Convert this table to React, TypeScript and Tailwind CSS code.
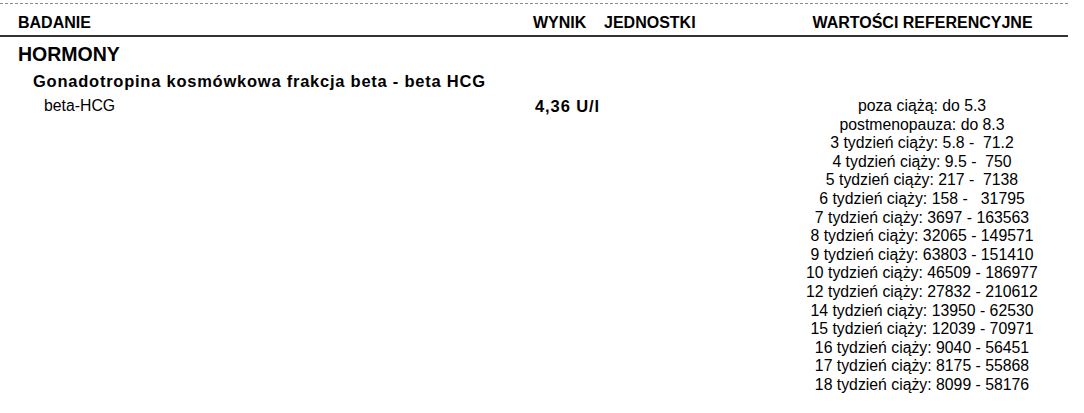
import React from "react";

const refs = [
  "poza ciążą: do 5.3",
  "postmenopauza: do 8.3",
  "3 tydzień ciąży: 5.8 -  71.2",
  "4 tydzień ciąży: 9.5 -  750",
  "5 tydzień ciąży: 217 -  7138",
  "6 tydzień ciąży: 158 -   31795",
  "7 tydzień ciąży: 3697 - 163563",
  "8 tydzień ciąży: 32065 - 149571",
  "9 tydzień ciąży: 63803 - 151410",
  "10 tydzień ciąży: 46509 - 186977",
  "12 tydzień ciąży: 27832 - 210612",
  "14 tydzień ciąży: 13950 - 62530",
  "15 tydzień ciąży: 12039 - 70971",
  "16 tydzień ciąży: 9040 - 56451",
  "17 tydzień ciąży: 8175 - 55868",
  "18 tydzień ciąży: 8099 - 58176",
];

export default function App() {
  return (
    <div
      className="w-[1084px] h-[413px] bg-white text-black overflow-hidden"
      style={{ fontFamily: '"Liberation Sans", Arial, sans-serif' }}
    >
      <div className="mt-[3px] w-[1068px] border-t border-dashed border-[#8a8a8a]" />
      <div className="w-[1068px] grid grid-cols-[533px_71px_172px_292px] pt-[10px] pb-[3px] border-b-2 border-[#333333] text-[16px] leading-[18px] font-bold whitespace-pre">
        <div className="pl-[18px]">BADANIE</div>
        <div>WYNIK</div>
        <div>JEDNOSTKI</div>
        <div className="text-center pl-[1px]">WARTOŚCI REFERENCYJNE</div>
      </div>
      <div className="mt-[6px] pl-[18px] text-[19.5px] leading-[22px] font-bold">HORMONY</div>
      <div className="mt-[6px] pl-[33px] text-[16.5px] leading-[20px] font-bold tracking-[0.76px]">
        Gonadotropina kosmówkowa frakcja beta - beta HCG
      </div>
      <div className="mt-[6px] w-[1068px] grid grid-cols-[533px_71px_172px_292px] text-[15.8px] leading-[18.6px]">
        <div className="pl-[44px]">beta-HCG</div>
        <div className="pl-[2px] font-bold whitespace-nowrap text-[16.5px] tracking-[0.9px]">4,36 U/l</div>
        <div />
        <div className="flex flex-col items-center whitespace-pre">
          {refs.map((r) => (
            <div key={r}>{r}</div>
          ))}
        </div>
      </div>
    </div>
  );
}
